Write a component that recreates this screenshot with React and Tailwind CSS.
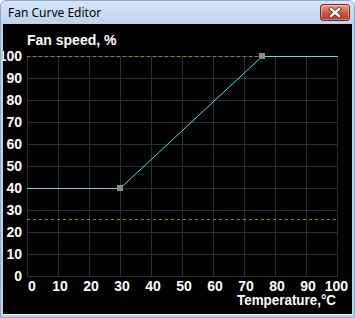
import React from "react";

const L = 27, R = 337, T = 57, B = 277;
const xOf = (t) => L + (t * (R - L)) / 100;
const yOf = (v) => B - (v * (B - T)) / 100;

function CloseButton() {
  return (
    <div className="w-[30px] h-[17px] rounded-[3px] border border-[#7a2a22] bg-gradient-to-b from-[#e8a090] via-[#cf5a48] to-[#b8382a] flex items-center justify-center shadow-[inset_0_0_0_1px_rgba(255,255,255,0.35)]">
      <svg width="14" height="11" viewBox="0 0 14 11">
        <path d="M3 2 L11 9 M11 2 L3 9" stroke="#5a2a2a" strokeWidth="4" strokeLinecap="square" />
        <path d="M3 2 L11 9 M11 2 L3 9" stroke="#ffffff" strokeWidth="2.4" strokeLinecap="square" />
      </svg>
    </div>
  );
}

function Chart() {
  const ticks = [0, 10, 20, 30, 40, 50, 60, 70, 80, 90, 100];
  const p1 = { x: xOf(30), y: yOf(40) };
  const p2 = { x: 262, y: T };

  return (
    <svg width="349" height="290" viewBox="3 25 349 290" className="block font-['Liberation_Sans',Arial,sans-serif] font-bold">
      <rect x="3" y="25" width="349" height="290" fill="#000" />
      {/* grid */}
      {ticks.map((t) => (
        <line key={"v" + t} x1={xOf(t) + 0.5} y1={T} x2={xOf(t) + 0.5} y2={B + 1} stroke="#2e2e2e" />
      ))}
      {ticks.map((t) => (
        <line key={"h" + t} x1={L} y1={yOf(t) + 0.5} x2={R + 1} y2={yOf(t) + 0.5} stroke="#2e2e2e" />
      ))}
      {/* limits */}
      <line x1={L} y1={T + 0.5} x2={p2.x} y2={T + 0.5} stroke="#8c8c00" strokeDasharray="3 3" />
      <line x1={L} y1={220.5} x2={R} y2={220.5} stroke="#8c8c00" strokeDasharray="3 3" />

      {/* curve */}
      <line x1={L} y1={p1.y + 0.5} x2={p1.x} y2={p1.y + 0.5} stroke="#3ee6ee" />
      <line x1={p1.x} y1={p1.y + 0.5} x2={p2.x} y2={p2.y + 0.5} stroke="#3ee6ee" />
      <line x1={p2.x} y1={p2.y + 0.5} x2={R + 1} y2={p2.y + 0.5} stroke="#3ee6ee" />
      <rect x={p1.x - 3} y={p1.y - 3} width="6" height="6" fill="#8a8a8a" />
      <rect x={p2.x - 3} y={p2.y - 3} width="6" height="6" fill="#8a8a8a" />

      <text x="27" y="46" fill="#fff" fontSize="14">
        Fan speed, %
      </text>
      {ticks.map((t) => (
        <text key={"y" + t} x="22" y={yOf(t) + 5} fill="#fff" fontSize="14" textAnchor="end">
          {t}
        </text>
      ))}
      {ticks.map((t) => (
        <text
          key={"x" + t}
          x={t === 0 ? 28 : t === 100 ? 348 : xOf(t) + 2}
          y="292"
          fill="#fff"
          fontSize="14"
          textAnchor={t === 0 ? "start" : t === 100 ? "end" : "middle"}
        >
          {t}
        </text>
      ))}
      <text x="237" y="306" fill="#fff" fontSize="14" textLength="99" lengthAdjust="spacingAndGlyphs">
        Temperature,°C
      </text>
    </svg>
  );
}

export default function App() {
  return (
    <div className="w-[355px] h-[318px] bg-[#bcd2ea] rounded-t-[6px] border border-[#8fa9c6] flex flex-col overflow-hidden">
      {/* Title bar */}
      <div className="h-[24px] flex items-center justify-between pl-[7px] pr-[4px] bg-gradient-to-b from-[#d6e5f5] to-[#bdd3eb]">
        <span className="text-[12px] text-black font-['Noto_Sans','Open_Sans',sans-serif]">Fan Curve Editor</span>
        <CloseButton />
      </div>
      {/* Client area */}
      <div className="flex-1 px-[2px] pb-[2px]">
        <div className="border-b border-r border-[#e0f4ff]">
          <Chart />
        </div>
      </div>
    </div>
  );
}
